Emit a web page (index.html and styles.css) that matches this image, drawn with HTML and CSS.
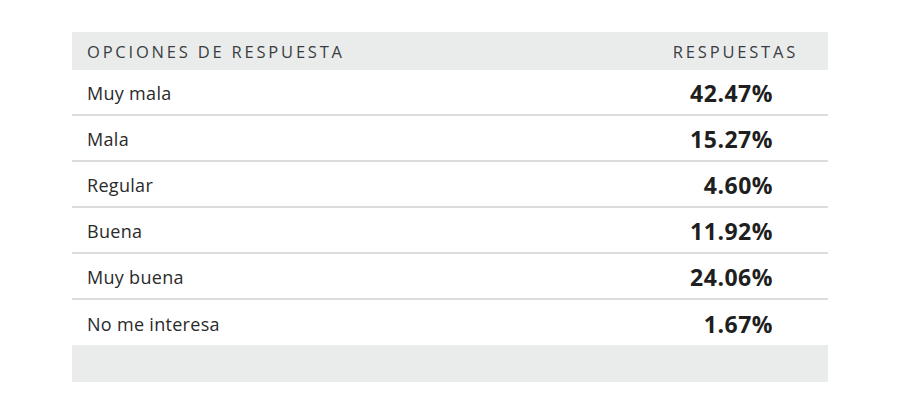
FILE: index.html
```html
<!DOCTYPE html>
<html lang="es">
<head>
<meta charset="utf-8">
<link rel="stylesheet" href="styles.css">
</head>
<body>
<div class="wrap">
  <table class="results">
    <thead>
      <tr><th class="opt">Opciones de respuesta</th><th class="val">Respuestas</th></tr>
    </thead>
    <tbody>
      <tr><td class="opt">Muy mala</td><td class="val">42.47%</td></tr>
      <tr><td class="opt">Mala</td><td class="val">15.27%</td></tr>
      <tr><td class="opt">Regular</td><td class="val">4.60%</td></tr>
      <tr><td class="opt">Buena</td><td class="val">11.92%</td></tr>
      <tr><td class="opt">Muy buena</td><td class="val">24.06%</td></tr>
      <tr><td class="opt">No me interesa</td><td class="val">1.67%</td></tr>
    </tbody>
    <tfoot>
      <tr><td colspan="2" class="foot"></td></tr>
    </tfoot>
  </table>
</div>
</body>
</html>
```

FILE: styles.css
```css
html, body {
  margin: 0;
  padding: 0;
  background: #ffffff;
}
body {
  font-family: "Open Sans", "Noto Sans", sans-serif;
  color: #2a2a2a;
}
.wrap {
  padding: 32px 72px 0 72px;
}
.results {
  width: 756px;
  border-collapse: collapse;
}
.results thead th {
  background: #eaecec;
  height: 38px;
  padding: 0;
  font-weight: 400;
  font-size: 16.5px;
  letter-spacing: 2.8px;
  text-transform: uppercase;
  color: #3a3d42;
}
.results thead th.opt {
  text-align: left;
  padding-left: 15px;
}
.results thead th.val {
  text-align: right;
  padding-right: 30px;
}
.results tbody td {
  height: 42px;
  padding: 2px 0 0 0;
  border-bottom: 2px solid #dcdcdc;
}
.results tbody tr:last-child td {
  border-bottom: none;
  height: 43px;
}
.results tbody td.opt {
  padding-left: 15px;
  font-size: 18px;
  letter-spacing: 0.3px;
  color: #2a2a2a;
}
.results tbody td.val {
  text-align: right;
  padding-right: 55px;
  font-size: 23px;
  letter-spacing: 0.5px;
  font-weight: 700;
  color: #1f1f1f;
}
.results tfoot td.foot {
  background: #eaecec;
  height: 37px;
  padding: 0;
}
```
